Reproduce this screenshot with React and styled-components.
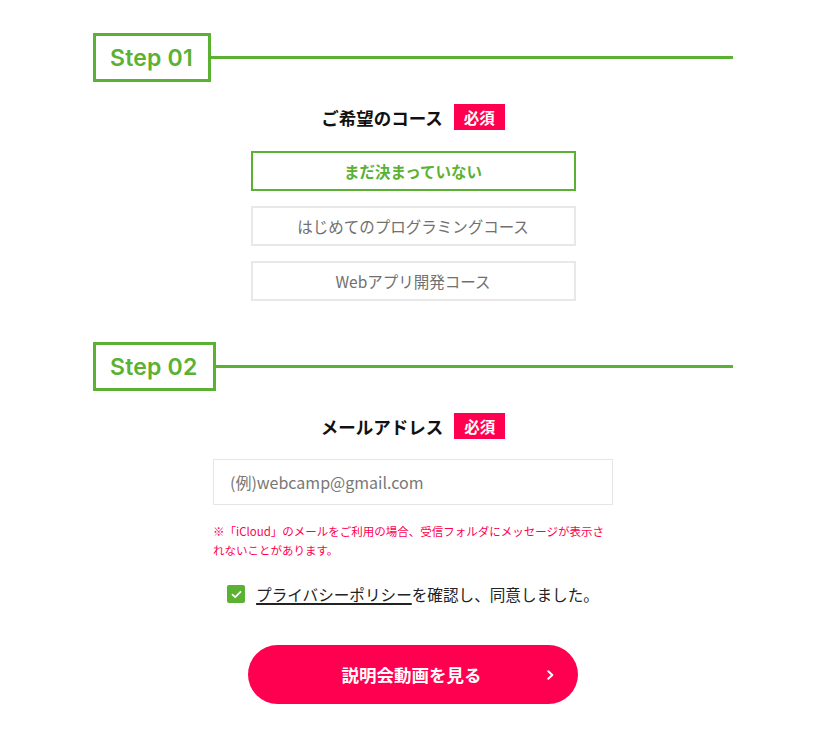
import React from "react";
import styled, { createGlobalStyle } from "styled-components";

const GREEN = "#5bb132";
const RED = "#ff0050";
const JP = `"Noto Sans CJK JP", "Noto Sans", sans-serif`;

const Global = createGlobalStyle`
  html, body { margin: 0; padding: 0; background: #fff; }
  body { font-family: ${JP}; color: #222; }
  * { box-sizing: border-box; }
`;

const Page = styled.div`
  width: 640px;
  margin-left: 93px;
  padding-top: 33px;
  padding-bottom: 40px;
`;

const Section = styled.section`
  display: flex;
  flex-direction: column;
  align-items: center;
  & + & { margin-top: 41px; }
`;

const StepHeader = styled.div`
  display: flex;
  align-items: center;
  width: 100%;
`;

const StepBox = styled.div`
  height: 49px;
  border: 3px solid ${GREEN};
  padding: 0 15px 0 14px;
  display: flex;
  align-items: center;
  font-family: Inter, "Open Sans", sans-serif;
  font-weight: 600;
  font-size: 23px;
  letter-spacing: 0.2px;
  color: ${GREEN};
`;

const StepLine = styled.div`
  flex: 1;
  height: 3px;
  background: ${GREEN};
`;

const FieldTitle = styled.div`
  margin-top: 22px;
  display: flex;
  align-items: center;
  gap: 11px;
  height: 26px;
  font-size: 17.5px;
  font-weight: 700;
  color: #111;
`;

const Badge = styled.span`
  display: inline-flex;
  align-items: center;
  justify-content: center;
  width: 51px;
  height: 26px;
  background: ${RED};
  color: #fff;
  font-size: 15.5px;
  font-weight: 700;
`;

const Options = styled.div`
  margin-top: 21px;
  display: flex;
  flex-direction: column;
  gap: 15px;
`;

const Option = styled.div`
  width: 325px;
  height: 40px;
  border: 2px solid ${(p) => (p.$selected ? GREEN : "#e8e8e8")};
  display: flex;
  align-items: center;
  justify-content: center;
  font-size: 15.5px;
  font-weight: ${(p) => (p.$selected ? 700 : 400)};
  color: ${(p) => (p.$selected ? GREEN : "#707070")};
`;

const Input = styled.input`
  margin-top: 20px;
  width: 400px;
  height: 46px;
  border: 1px solid #e6e6e6;
  padding: 0 16px;
  font-family: ${JP};
  font-size: 16px;
  color: #222;
  outline: none;
  &::placeholder { color: #777; }
`;

const Note = styled.div`
  margin-top: 17px;
  width: 400px;
  font-size: 11.5px;
  line-height: 19.2px;
  color: ${RED};
  & > span { display: block; white-space: nowrap; }
`;

const CheckRow = styled.label`
  margin-top: 22px;
  display: flex;
  align-items: center;
  gap: 11px;
  height: 24px;
  font-size: 15.6px;
  color: #222;
`;

const CheckBox = styled.span`
  width: 18px;
  height: 18px;
  border-radius: 2px;
  background: ${GREEN};
  display: inline-flex;
  align-items: center;
  justify-content: center;
`;

const Link = styled.span`
  text-decoration: underline;
  text-decoration-thickness: 1.5px;
  text-underline-offset: 2px;
`;

const Button = styled.button`
  position: relative;
  margin-top: 39px;
  width: 330px;
  height: 59px;
  border: none;
  border-radius: 30px;
  background: ${RED};
  color: #fff;
  font-family: ${JP};
  font-size: 17.5px;
  font-weight: 700;
  padding: 0 3px 0 0;
  cursor: pointer;
`;

const Chevron = styled.svg`
  position: absolute;
  right: 24px;
  top: 50%;
  transform: translateY(-50%);
`;

export default function App() {
  return (
    <>
      <Global />
      <Page>
        <Section>
          <StepHeader>
            <StepBox>Step 01</StepBox>
            <StepLine />
          </StepHeader>
          <FieldTitle>
            ご希望のコース<Badge>必須</Badge>
          </FieldTitle>
          <Options>
            <Option $selected>まだ決まっていない</Option>
            <Option>はじめてのプログラミングコース</Option>
            <Option>Webアプリ開発コース</Option>
          </Options>
        </Section>
        <Section>
          <StepHeader>
            <StepBox>Step 02</StepBox>
            <StepLine />
          </StepHeader>
          <FieldTitle>
            メールアドレス<Badge>必須</Badge>
          </FieldTitle>
          <Input placeholder="(例)webcamp@gmail.com" />
          <Note>
            <span>※「iCloud」のメールをご利用の場合、受信フォルダにメッセージが表示さ</span>
            <span>れないことがあります。</span>
          </Note>
          <CheckRow>
            <CheckBox>
              <svg width="11" height="9" viewBox="0 0 11 9">
                <path d="M1.5 4.6 L4.2 7.2 L9.5 1.8" fill="none" stroke="#fff" strokeWidth="1.8" strokeLinecap="round" strokeLinejoin="round" />
              </svg>
            </CheckBox>
            <span>
              <Link>プライバシーポリシー</Link>を確認し、同意しました。
            </span>
          </CheckRow>
          <Button>
            説明会動画を見る
            <Chevron width="7" height="10" viewBox="0 0 7 10">
              <path d="M1.3 1.2 L5.3 5 L1.3 8.8" fill="none" stroke="#fff" strokeWidth="2" strokeLinecap="round" strokeLinejoin="round" />
            </Chevron>
          </Button>
        </Section>
      </Page>
    </>
  );
}
